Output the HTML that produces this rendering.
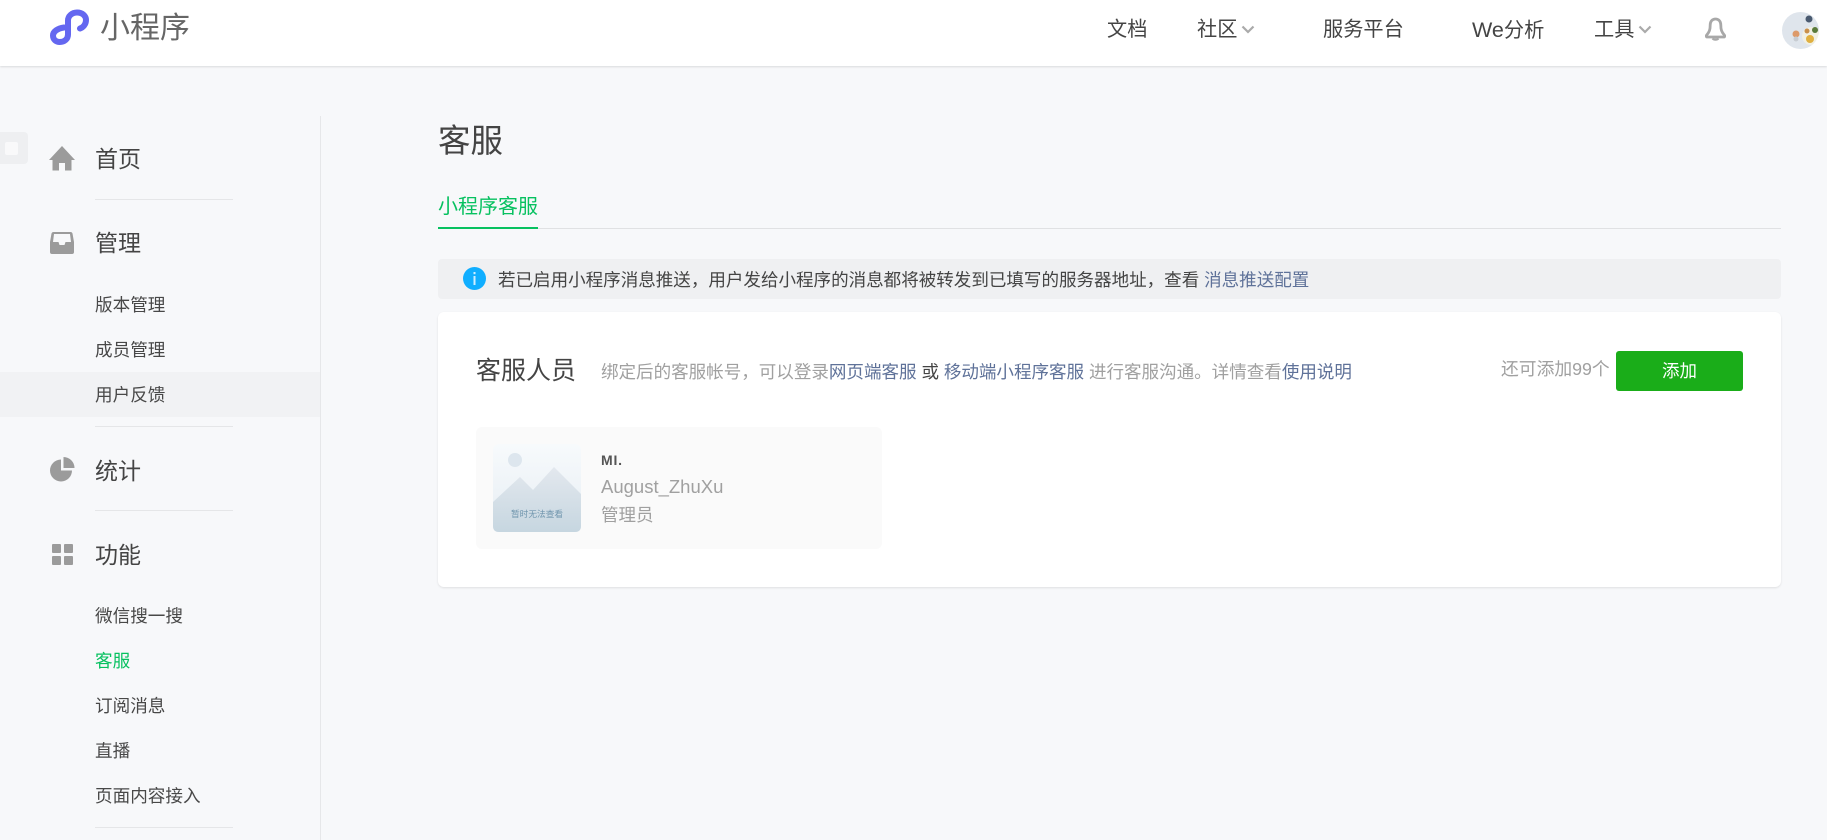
<!DOCTYPE html>
<html lang="zh-CN"><head><meta charset="utf-8"><title>小程序</title>
<style>
html,body{margin:0;padding:0;width:1827px;height:840px;overflow:hidden;background:#f7f8fa}
body{font-family:"Liberation Sans","Noto Sans CJK SC",sans-serif;color:#444}
#w{position:absolute;left:0;top:0;width:1827px;height:840px;overflow:hidden;filter:blur(.3px)}
.a,.t{position:absolute;white-space:nowrap}
.t{line-height:30px;height:30px;margin-top:-15px}
a{color:#5f7299;text-decoration:none}
.nav{font-size:20.200px;color:#444}
.m{font-size:23px;left:95px;color:#444}
.s{font-size:17.600px;left:95px;color:#484848}
.d{position:absolute;left:95px;width:138px;height:1px;background:#e5e6e8}
.g{color:#a0a0a0}
</style></head><body><div id="w">
<div class="a" style="left:0;top:0;width:1827px;height:66px;background:#fff;box-shadow:0 1px 2px rgba(0,0,0,.12)"></div>
<svg class="a" style="left:49px;top:9px" width="42" height="38" viewBox="0 0 42 38"><path d="M15 18.500C8.500 19.500 4 22.500 4 26.500 4 30.500 7 33 10.800 33 15.500 33 19 30 19 25.500V11.500C19 7 23 3.500 28 3.500 33.500 3.500 37 7 37 11 37 15.500 34 18.500 31 19.500" fill="none" stroke="#6467f0" stroke-width="6" stroke-linecap="round"/></svg>
<div class="t" style="left:100px;top:29px;font-size:30px;color:#666">小程序</div>

<div class="t nav" style="left:1107px;top:30px">文档</div>
<div class="t nav" style="left:1197px;top:30px">社区</div>
<svg class="a" style="left:1241px;top:25px" width="14" height="9" viewBox="0 0 14 9"><path d="M1.500 1.500 7 7l5.500-5.500" fill="none" stroke="#aaa" stroke-width="2.200"/></svg>
<div class="t nav" style="left:1323px;top:30px">服务平台</div>
<div class="t nav" style="left:1472px;top:30px"><span style="font-size:21.500px">We</span>分析</div>
<div class="t nav" style="left:1594px;top:30px">工具</div>
<svg class="a" style="left:1638px;top:25px" width="14" height="9" viewBox="0 0 14 9"><path d="M1.500 1.500 7 7l5.500-5.500" fill="none" stroke="#aaa" stroke-width="2.200"/></svg>
<svg class="a" style="left:1705px;top:17px" width="21" height="24" viewBox="0 0 21 24"><path d="M10.500 2c-3.500 0-5.300 2.800-5.300 6 0 4.500-.7 7-3.700 10.300-.5.700-.2 1.700.8 1.700h16.400c1 0 1.300-1 .8-1.700C16.500 15 15.800 12.500 15.800 8c0-3.200-1.800-6-5.300-6z" fill="none" stroke="#a8a8a8" stroke-width="2.800"/><path d="M7.500 21.500c1.500 1.500 4.500 1.500 6 0" fill="none" stroke="#a8a8a8" stroke-width="2.200"/></svg>
<svg class="a" style="left:1782px;top:12px" width="37" height="37" viewBox="0 0 37 37"><defs><clipPath id="c"><circle cx="18.500" cy="18.500" r="18.500"/></clipPath></defs><g clip-path="url(#c)"><rect width="37" height="37" fill="#dfe5ec"/><circle cx="27" cy="7" r="3.500" fill="#4a5a70"/><circle cx="14" cy="22" r="3.500" fill="#dd9a6a"/><circle cx="14" cy="27" r="2.500" fill="#c7ccd2"/><circle cx="29" cy="24" r="9" fill="#f1f0e4"/><circle cx="28" cy="27" r="4" fill="#e0b040"/><circle cx="33" cy="18" r="3" fill="#5a7a3a"/><circle cx="25" cy="19" r="2.500" fill="#c98f4a"/></g></svg>

<div class="a" style="left:320px;top:116px;width:1px;height:724px;background:#e6e7e9"></div>
<div class="a" style="left:0;top:132px;width:28px;height:32px;background:#eeeff1;border-radius:0 4px 4px 0"></div>
<div class="a" style="left:5px;top:142px;width:13px;height:13px;background:#f9f9fa;border-radius:2px"></div>
<div class="a" style="left:0;top:372px;width:320px;height:45px;background:#f1f2f4"></div>

<svg class="a" style="left:49px;top:146px" width="26" height="25" viewBox="0 0 26 25"><path d="M13 0 0 14h3.500v10.500h6.500V17h6v7.500h6.500V14H26z" fill="#9b9b9b"/></svg>
<div class="t m" style="top:159px">首页</div>
<div class="d" style="top:199px"></div>
<svg class="a" style="left:50px;top:232px" width="24" height="22" viewBox="0 0 24 22"><path d="M3.500 0h17q1.500 0 2 1.500L24 10v10q0 2-2 2H2q-2 0-2-2V10l1.500-8.500Q2 0 3.500 0zM4 2 3 10h5.500l1 3h5l1-3H21l-1-8z" fill="#9b9b9b" fill-rule="evenodd"/></svg>
<div class="t m" style="top:243px">管理</div>
<div class="t s" style="top:305px">版本管理</div>
<div class="t s" style="top:350px">成员管理</div>
<div class="t s" style="top:395px">用户反馈</div>
<div class="d" style="top:426px"></div>
<svg class="a" style="left:50px;top:457px" width="25" height="25" viewBox="0 0 25 25"><path d="M11 2.500a11 11 0 1 0 11 11H11z" fill="#9b9b9b"/><path d="M13.500 0a11 11 0 0 1 11 11h-11z" fill="#9b9b9b"/></svg>
<div class="t m" style="top:471px">统计</div>
<div class="d" style="top:510px"></div>
<svg class="a" style="left:52px;top:544px" width="21" height="21" viewBox="0 0 21 21" fill="#9b9b9b"><rect width="9" height="9" rx="1"/><rect x="12" width="9" height="9" rx="1"/><rect y="12" width="9" height="9" rx="1"/><rect x="12" y="12" width="9" height="9" rx="1"/></svg>
<div class="t m" style="top:555px">功能</div>
<div class="t s" style="top:616px">微信搜一搜</div>
<div class="t s" style="top:661px;color:#07c160">客服</div>
<div class="t s" style="top:706px">订阅消息</div>
<div class="t s" style="top:751px">直播</div>
<div class="t s" style="top:796px">页面内容接入</div>
<div class="d" style="top:827px"></div>

<div class="t" style="left:438px;top:141px;font-size:32.500px">客服</div>
<div class="t" style="left:438px;top:207px;font-size:20px;color:#07c160">小程序客服</div>
<div class="a" style="left:438px;top:228px;width:1343px;height:1px;background:#e0e1e3"></div>
<div class="a" style="left:438px;top:227px;width:100px;height:2px;background:#07c160"></div>

<div class="a" style="left:438px;top:259px;width:1343px;height:40px;background:#eff0f2;border-radius:4px"></div>
<svg class="a" style="left:463px;top:267px" width="23" height="23" viewBox="0 0 23 23"><circle cx="11.500" cy="11.500" r="11.500" fill="#10aeff"/><rect x="10.500" y="5" width="2" height="2.200" fill="#cfeeff"/><rect x="10.500" y="9" width="2" height="9" fill="#cfeeff"/></svg>
<div class="t" style="left:498px;top:280px;font-size:17.550px">若已启用小程序消息推送，用户发给小程序的消息都将被转发到已填写的服务器地址，查看 <a>消息推送配置</a></div>

<div class="a" style="left:438px;top:312px;width:1343px;height:275px;background:#fff;border-radius:6px;box-shadow:0 1px 2px rgba(0,0,0,.1)"></div>
<div class="t" style="left:476px;top:371px;font-size:25px">客服人员</div>
<div class="t g" style="left:601px;top:372px;font-size:17.550px">绑定后的客服帐号，可以登录<a>网页端客服</a> <span style="color:#444">或</span> <a>移动端小程序客服</a> 进行客服沟通。详情查看<a>使用说明</a></div>
<div class="t g" style="left:1501px;top:369px;font-size:17.800px">还可添加99个</div>
<div class="a" style="left:1616px;top:351px;width:127px;height:40px;background:#1aad19;border-radius:3px;color:#fff;font-size:17.500px;line-height:41px;text-align:center">添加</div>

<div class="a" style="left:476px;top:427px;width:406px;height:122px;background:#fafafa;border-radius:6px"></div>
<svg class="a" style="left:493px;top:444px" width="88" height="88" viewBox="0 0 88 88"><defs><linearGradient id="b" x1="0" y1="0" x2="0" y2="1"><stop offset="0" stop-color="#f7fafc"/><stop offset="1" stop-color="#e6edf3"/></linearGradient><linearGradient id="h" x1="0" y1="0" x2="0" y2="1"><stop offset="0" stop-color="#e3e8ee"/><stop offset="1" stop-color="#c6d6e0"/></linearGradient></defs><rect width="88" height="88" rx="6" fill="url(#b)"/><circle cx="22" cy="16" r="7" fill="#dde6ee"/><path d="M0 58 27 33l13 13 21-23 27 27v32q0 6-6 6H6q-6 0-6-6z" fill="url(#h)"/><text x="44" y="73" text-anchor="middle" font-size="8.700" fill="#6f95ad" font-family="Liberation Sans,Noto Sans CJK SC,sans-serif">暂时无法查看</text></svg>
<div class="t" style="left:601px;top:460px;font-size:14px;font-weight:bold;letter-spacing:.8px;color:#555">MI.</div>
<div class="t g" style="left:601px;top:487px;font-size:18.500px">August_ZhuXu</div>
<div class="t g" style="left:601px;top:515px;font-size:17.500px">管理员</div>
</div></body></html>
